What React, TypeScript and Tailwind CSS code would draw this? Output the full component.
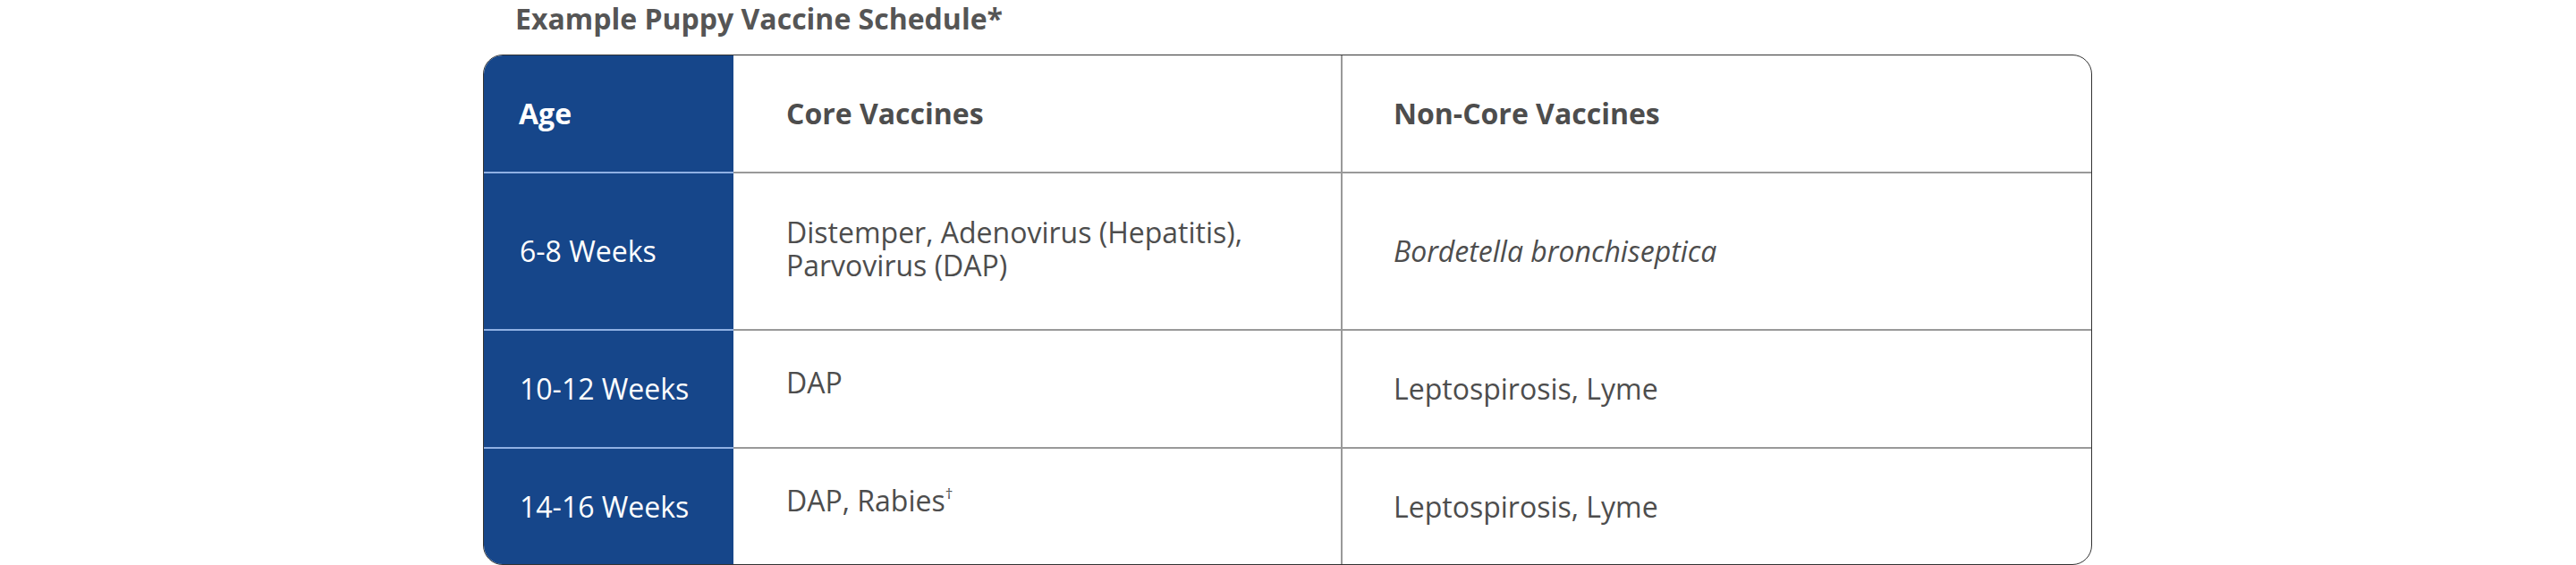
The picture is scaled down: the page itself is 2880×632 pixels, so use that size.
import React from 'react';

type Row = {
  age: string;
  core: React.ReactNode;
  nonCore: React.ReactNode;
  height: string;
  corePad: string;
  last?: boolean;
};

const rows: Row[] = [
  {
    age: '6-8 Weeks',
    core: (
      <>
        Distemper, Adenovirus (Hepatitis),
        <br />
        Parvovirus (DAP)
      </>
    ),
    nonCore: <em>Bordetella bronchiseptica</em>,
    height: 'h-[176px]',
    corePad: 'pb-[7px]',
  },
  {
    age: '10-12 Weeks',
    core: 'DAP',
    nonCore: 'Leptospirosis, Lyme',
    height: 'h-[132px]',
    corePad: 'pb-[16px]',
  },
  {
    age: '14-16 Weeks',
    core: (
      <>
        DAP, Rabies
        <sup className="text-[17px] align-top relative top-[2px] leading-none">†</sup>
      </>
    ),
    nonCore: 'Leptospirosis, Lyme',
    height: 'h-[129px]',
    corePad: 'pb-[14px]',
    last: true,
  },
];

export default function App() {
  return (
    <div className="w-[2880px] h-[632px] bg-white font-['Open_Sans',sans-serif] text-[#4d4d4d]">
      <div className="ml-[540px] w-[1799px] pt-[3px]">
        {/* Title */}
        <h3 className="pl-[36px] text-[32px] leading-[36px] font-bold text-[#555555] mb-[22px]">
          Example Puppy Vaccine Schedule*
        </h3>

        {/* Table */}
        <div className="border border-[#333333] rounded-[22px] overflow-hidden">
          <div className="flex h-[132px] text-[32px] font-bold">
            <div className="w-[279px] bg-[#16468a] border-b-2 border-[#8fb0e3] flex items-center pl-[39px] text-white">
              Age
            </div>
            <div className="w-[681px] border-b-2 border-r-2 border-[#999999] flex items-center pl-[59px]">
              Core Vaccines
            </div>
            <div className="flex-1 border-b-2 border-[#999999] flex items-center pl-[57px]">
              Non-Core Vaccines
            </div>
          </div>

          {rows.map((row) => (
            <div key={row.age} className={`flex text-[32px] ${row.height}`}>
              <div
                className={`w-[279px] bg-[#16468a] border-[#8fb0e3] flex items-center pl-[40px] text-white ${row.last ? '' : 'border-b-2'}`}
              >
                {row.age}
              </div>
              <div
                className={`w-[681px] border-r-2 border-[#999999] flex items-center pl-[59px] leading-[37px] ${row.corePad} ${row.last ? '' : 'border-b-2'}`}
              >
                <p>{row.core}</p>
              </div>
              <div
                className={`flex-1 border-[#999999] flex items-center pl-[57px] ${row.last ? '' : 'border-b-2'}`}
              >
                {row.nonCore}
              </div>
            </div>
          ))}
        </div>
      </div>
    </div>
  );
}
